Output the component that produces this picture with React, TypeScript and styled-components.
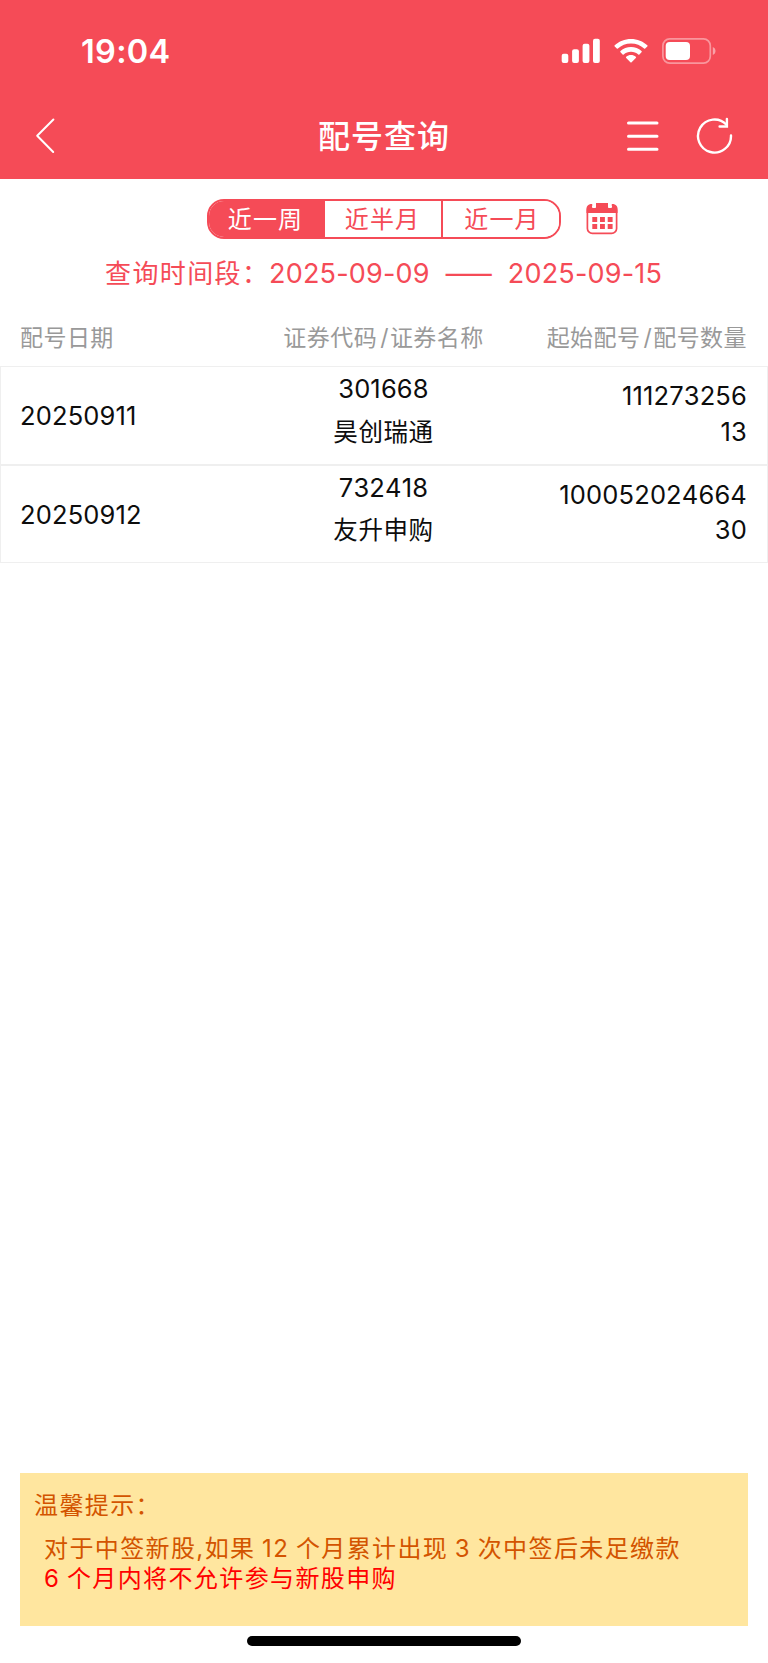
import React from "react";
import styled, { createGlobalStyle } from "styled-components";

const RED = "#f54b57";

const GlobalStyle = createGlobalStyle`
  * { box-sizing: border-box; }
  body {
    margin: 0;
    background: #fff;
    font-family: Inter, "Noto Sans CJK SC", sans-serif;
    color: #0d0d0d;
  }
`;

const Screen = styled.div`
  width: 768px;
  height: 1663px;
  display: flex;
  flex-direction: column;
  overflow: hidden;
  background: #fff;
`;

const Header = styled.header`
  height: 179px;
  flex: none;
  background: ${RED};
  color: #fff;
`;

const StatusBar = styled.div`
  height: 93px;
  padding: 9px 52px 0 81px;
  display: flex;
  align-items: center;
  justify-content: space-between;
`;

const Clock = styled.span`
  padding-top: 2px;
  font-size: 32.5px;
  font-weight: 600;
  line-height: 40px;
  letter-spacing: 0.3px;
`;

const StatusIcons = styled.div`
  display: flex;
  align-items: center;
`;

const NavBar = styled.nav`
  height: 86px;
  display: grid;
  grid-template-columns: 200px 1fr 200px;
  align-items: center;
`;

const BackButton = styled.div`
  padding-left: 34px;
  display: flex;
`;

const Title = styled.h1`
  margin: 0;
  padding-top: 2px;
  text-align: center;
  font-size: 32px;
  font-weight: 500;
  line-height: 40px;
  letter-spacing: 1px;
`;

const NavActions = styled.div`
  display: flex;
  align-items: center;
  justify-content: flex-end;
  gap: 35px;
  padding-right: 35px;
`;

const Filters = styled.div`
  height: 40px;
  margin-top: 20px;
  padding-left: 207px;
  display: flex;
  gap: 25px;
`;

const Segments = styled.div`
  width: 354px;
  height: 39.5px;
  display: grid;
  grid-template-columns: 114px 118px 1fr;
  border: 2px solid ${RED};
  border-radius: 17px;
  overflow: hidden;
`;

const Segment = styled.div<{ $active?: boolean }>`
  text-align: center;
  font-size: 24px;
  line-height: 37px;
  letter-spacing: 1.2px;
  color: ${(p) => (p.$active ? "#fff" : RED)};
  background: ${(p) => (p.$active ? RED : "#fff")};
  & + & { border-left: 2px solid ${RED}; }
  &:not(:last-child) { padding-right: 1px; }
  &:last-child { padding-left: 2px; }
`;

const Period = styled.div`
  height: 34px;
  margin-top: 17px;
  padding-left: 105px;
  display: flex;
  align-items: center;
  white-space: nowrap;
  line-height: 34px;
  color: ${RED};
`;

const PeriodLabel = styled.span`
  width: 164px;
  padding-top: 1px;
  font-size: 26px;
  letter-spacing: 1.4px;
`;

const PeriodDate = styled.span`
  padding-top: 1px;
  font-size: 27px;
  letter-spacing: 0.2px;
`;

const PeriodDash = styled.span`
  width: 78px;
  height: 34px;
  text-align: center;
  font-family: "Noto Sans CJK SC", sans-serif;
  font-size: 29px;
  font-weight: 500;
  line-height: 28px;
`;

const Columns = styled.div`
  display: grid;
  grid-template-columns: 1fr 240px 1fr;
  align-items: center;
  padding: 0 20px;
`;

const ColumnHeads = styled(Columns)`
  height: 76px;
  padding: 19px 21px 0 20px;
  font-size: 23px;
  letter-spacing: 0.45px;
  line-height: 30px;
  color: #999;
`;

const Slash = styled.span`
  margin: 0 1px 0 3px;
`;

const Row = styled(Columns)`
  height: 98.5px;
  border: 1px solid #efefef;
  padding: 0 20px 0 19px;
  font-size: 25.5px;
  letter-spacing: 0.15px;
  font-kerning: none;
`;

const Cell = styled.div<{ $align?: "left" | "center" | "right"; $leading?: number; $lift?: number; $drop?: number }>`
  text-align: ${(p) => p.$align ?? "left"};
  line-height: ${(p) => p.$leading ?? 36}px;
  padding-top: ${(p) => p.$drop ?? 0}px;
  padding-bottom: ${(p) => p.$lift ?? 0}px;
  white-space: nowrap;
`;

const StockName = styled.div`
  font-size: 24.5px;
  letter-spacing: 0.6px;
`;

const Notice = styled.section`
  height: 153px;
  margin: auto 20px 0;
  padding: 17px 14px;
  background: #ffe69f;
  color: #d35400;
  font-size: 24px;
  letter-spacing: 1.39px;
  word-spacing: -1.5px;
  white-space: nowrap;
`;

const NoticeTitle = styled.div`
  line-height: 32px;
`;

const NoticeLine = styled.div<{ $alert?: boolean }>`
  padding-left: 10px;
  line-height: 30px;
  color: ${(p) => (p.$alert ? "#ff0000" : "inherit")};
`;

const NoticeBody = styled.div`
  margin-top: 12px;
`;

const HomeArea = styled.footer`
  height: 37px;
  flex: none;
  display: flex;
  justify-content: center;
  padding-top: 10px;
`;

const HomeIndicator = styled.div`
  width: 274px;
  height: 10px;
  border-radius: 5px;
  background: #000;
`;

const SignalIcon = () => (
  <svg width="40" height="26" viewBox="0 0 40 26" fill="#fff">
    <rect x="0.7" y="15.8" width="6.6" height="9.2" rx="2" />
    <rect x="11.1" y="11.2" width="6.8" height="13.8" rx="2" />
    <rect x="21.6" y="5.8" width="6.8" height="19.2" rx="2" />
    <rect x="32" y="0.8" width="6.8" height="24.2" rx="2" />
  </svg>
);

const WifiGlyph = styled.svg`
  margin-left: 13px;
`;

const WifiIcon = () => (
  <WifiGlyph width="34" height="26" viewBox="0 0 34 26" fill="#fff">
    <path d="M17 1C10.7 1 4.9 3.4.7 7.3a.8.8 0 0 0 0 1.2l2.1 2.1a.8.8 0 0 0 1.1 0C7.3 7.5 11.9 5.6 17 5.6s9.7 1.9 13.1 5a.8.8 0 0 0 1.1 0l2.1-2.1a.8.8 0 0 0 0-1.2C29.1 3.4 23.3 1 17 1Z" />
    <path d="M17 9.1c-4 0-7.7 1.5-10.5 4a.8.8 0 0 0 0 1.2l2.1 2.1a.8.8 0 0 0 1.1 0c2-1.7 4.5-2.7 7.3-2.7s5.3 1 7.3 2.7a.8.8 0 0 0 1.1 0l2.1-2.1a.8.8 0 0 0 0-1.2C24.7 10.6 21 9.1 17 9.1Z" />
    <path d="M17 17c-1.8 0-3.5.6-4.8 1.7a.8.8 0 0 0 0 1.2l4.2 4.4c.4.4.8.4 1.2 0l4.2-4.4a.8.8 0 0 0 0-1.2C20.5 17.6 18.8 17 17 17Z" />
  </WifiGlyph>
);

const BatteryGlyph = styled.svg`
  margin-left: 14px;
`;

const BatteryIcon = () => (
  <BatteryGlyph width="54" height="26" viewBox="0 0 54 26">
    <rect x="0.9" y="0.9" width="47.4" height="24.2" rx="6.8" fill="none" stroke="#fff" strokeOpacity=".42" strokeWidth="1.7" />
    <rect x="3.7" y="4" width="24.3" height="18" rx="4" fill="#fff" />
    <path d="M50.8 9v8c1.7-.7 2.7-2.2 2.7-4s-1-3.3-2.7-4Z" fill="#fff" fillOpacity=".48" />
  </BatteryGlyph>
);

const BackIcon = () => (
  <svg width="24" height="38" viewBox="0 0 24 38" fill="none" stroke="#fff" strokeWidth="2" strokeLinecap="round" strokeLinejoin="round">
    <path d="M19.4 2.5 3.2 18.7 19.2 35" />
  </svg>
);

const MenuIcon = () => (
  <svg width="34" height="34" viewBox="0 0 34 34" stroke="#fff" strokeWidth="3" strokeLinecap="round">
    <path d="M2.5 4h28.5M2.5 17.2h28.5M2.5 30.3h28.5" />
  </svg>
);

const RefreshIcon = () => (
  <svg width="38" height="38" viewBox="0 0 38 38" fill="none" stroke="#fff" strokeWidth="2.4" strokeLinecap="round">
    <path d="M36 18.5A16.5 16.5 0 1 1 31.5 7.7" />
    <path d="M31.9 2v7.5h-7.3" />
  </svg>
);

const CalendarGlyph = styled.svg`
  margin-top: 4px;
`;

const CalendarIcon = () => (
  <CalendarGlyph width="32" height="32" viewBox="0 0 32 32">
    <rect x="1.4" y="2" width="29.2" height="28.4" rx="5" fill="none" stroke={RED} strokeWidth="1.7" />
    <path
      d="M.5 10V5.5Q.5 2 4.5 1H6V3.5Q6 5 7.5 5H8.5Q10 5 10 3.5V0H22V3.5Q22 5 23.5 5H24.5Q26 5 26 3.5V1H27.5Q31.5 2 31.5 5.5V10Z"
      fill={RED}
    />
    <path d="M6.3 2V0H10V3.5Q10 5 8.5 5H7.5Q6.3 5 6.3 3.5ZM22 2V0H25.7V3.5Q25.7 5 24.5 5H23.5Q22 5 22 3.5Z" fill="#fff" />
    <path d="M6.3 14h4.9v4.9H6.3zM14 14h4.9v4.9H14zM21.7 14h4.9v4.9h-4.9zM6.3 21h4.9v4.9H6.3zM14 21h4.9v4.9H14zM21.7 21h4.9v4.9h-4.9z" fill={RED} />
  </CalendarGlyph>
);

const ranges = ["近一周", "近半月", "近一月"];

const allotments = [
  { date: "20250911", code: "301668", name: "昊创瑞通", start: "111273256", count: "13" },
  { date: "20250912", code: "732418", name: "友升申购", start: "100052024664", count: "30" },
];

export default function App() {
  return (
    <Screen>
      <GlobalStyle />
      <Header>
        <StatusBar>
          <Clock>19:04</Clock>
          <StatusIcons>
            <SignalIcon />
            <WifiIcon />
            <BatteryIcon />
          </StatusIcons>
        </StatusBar>
        <NavBar>
          <BackButton><BackIcon /></BackButton>
          <Title>配号查询</Title>
          <NavActions>
            <MenuIcon />
            <RefreshIcon />
          </NavActions>
        </NavBar>
      </Header>

      <Filters>
        <Segments>
          {ranges.map((label, i) => (
            <Segment key={label} $active={i === 0}>{label}</Segment>
          ))}
        </Segments>
        <CalendarIcon />
      </Filters>

      <Period>
        <PeriodLabel>查询时间段：</PeriodLabel>
        <PeriodDate>2025-09-09</PeriodDate>
        <PeriodDash>——</PeriodDash>
        <PeriodDate>2025-09-15</PeriodDate>
      </Period>

      <ColumnHeads>
        <Cell>配号日期</Cell>
        <Cell $align="center">证券代码<Slash>/</Slash>证券名称</Cell>
        <Cell $align="right">起始配号<Slash>/</Slash>配号数量</Cell>
      </ColumnHeads>

      {allotments.map((item) => (
        <Row key={item.date}>
          <Cell $drop={2}>{item.date}</Cell>
          <Cell $align="center" $leading={43.5} $lift={9}>
            <div>{item.code}</div>
            <StockName>{item.name}</StockName>
          </Cell>
          <Cell $align="right" $leading={35.5} $lift={3}>
            <div>{item.start}</div>
            <div>{item.count}</div>
          </Cell>
        </Row>
      ))}

      <Notice>
        <NoticeTitle>温馨提示：</NoticeTitle>
        <NoticeBody>
          <NoticeLine>对于中签新股,如果 12 个月累计出现 3 次中签后未足缴款</NoticeLine>
          <NoticeLine $alert>6 个月内将不允许参与新股申购</NoticeLine>
        </NoticeBody>
      </Notice>
      <HomeArea>
        <HomeIndicator />
      </HomeArea>
    </Screen>
  );
}
